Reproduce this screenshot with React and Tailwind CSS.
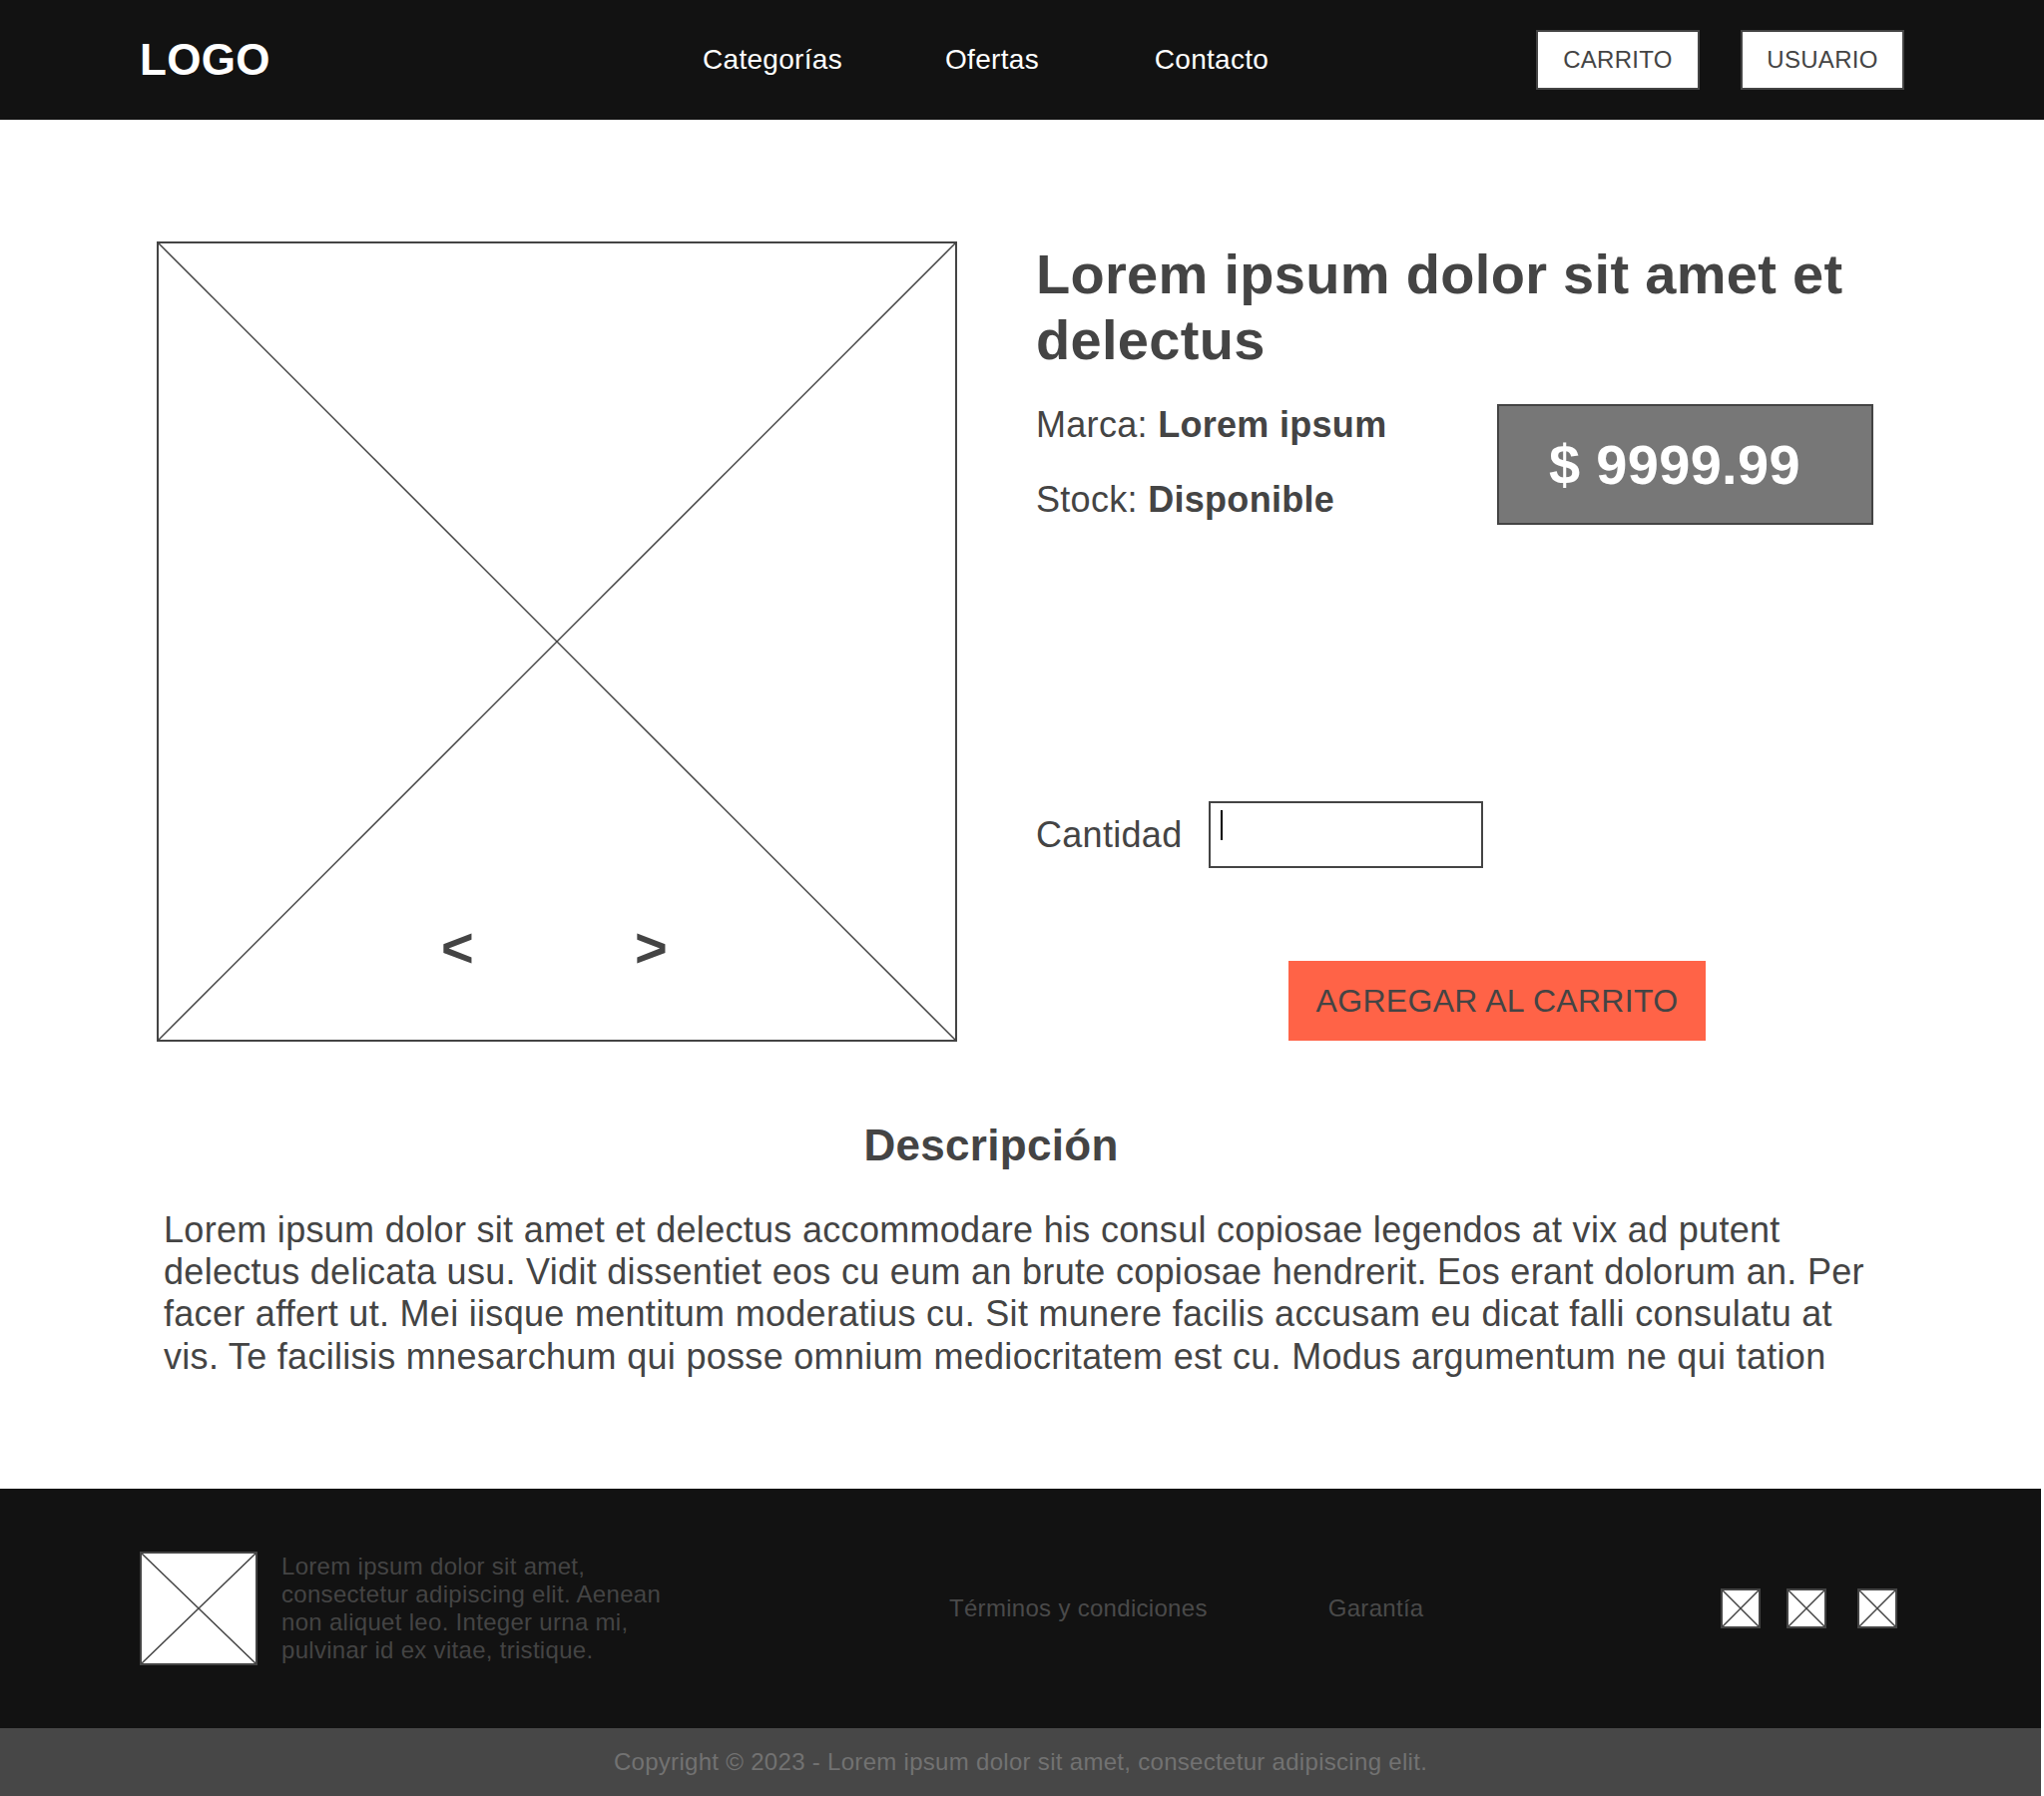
import { useState } from 'react';

function Placeholder({ className = '', stroke = 1.5 }) {
  return (
    <div className={`relative bg-white border-2 border-[#444] ${className}`}>
      <svg
        className="absolute inset-0 h-full w-full"
        viewBox="0 0 100 100"
        preserveAspectRatio="none"
      >
        <line x1="0" y1="0" x2="100" y2="100" stroke="#444" strokeWidth={stroke} vectorEffect="non-scaling-stroke" />
        <line x1="100" y1="0" x2="0" y2="100" stroke="#444" strokeWidth={stroke} vectorEffect="non-scaling-stroke" />
      </svg>
    </div>
  );
}

export default function App() {
  const [cantidad, setCantidad] = useState('');

  const navLinks = ['Categorías', 'Ofertas', 'Contacto'];

  return (
    <div className="min-h-screen bg-white font-['Liberation_Sans',Arial,sans-serif] tracking-[0.3px] text-[#444]">
      {/* Header */}
      <header className="flex h-[120px] items-center bg-[#121212] px-[140px]">
        <div className="w-[524px]">
          <span className="text-[44px] font-bold leading-none text-white">LOGO</span>
        </div>
        <nav className="flex">
          {navLinks.map((link) => (
            <a key={link} href="#" className="w-[220px] text-center text-[28px] text-white">
              {link}
            </a>
          ))}
        </nav>
        <div className="flex-1" />
        <div className="flex gap-[41px]">
          <button className="h-[60px] w-[164px] border-2 border-[#444] bg-white text-[24px] text-[#444]">
            CARRITO
          </button>
          <button className="h-[60px] w-[164px] border-2 border-[#444] bg-white text-[24px] text-[#444]">
            USUARIO
          </button>
        </div>
      </header>

      {/* Producto */}
      <main className="flex items-start pl-[157px] pt-[122px]">
        <div className="relative">
          <Placeholder className="h-[802px] w-[802px]" />
          <div className="absolute left-[285px] top-[680px] flex text-[56px] font-bold leading-none text-[#444]">
            <span>&lt;</span>
            <span className="ml-[161px]">&gt;</span>
          </div>
        </div>

        <div className="ml-[79px] flex-1 pr-[80px]">
          <h1 className="text-[56px] font-bold leading-[66px]">
            Lorem ipsum dolor sit amet et delectus
          </h1>

          <div className="mt-[31px] flex items-start">
            <div className="w-[462px] text-[36px] leading-[41px]">
              <p>
                Marca: <span className="font-bold">Lorem ipsum</span>
              </p>
              <p className="mt-[34px]">
                Stock: <span className="font-bold">Disponible</span>
              </p>
            </div>
            <div className="flex h-[121px] w-[377px] items-center border-2 border-[#444] bg-[#777] pl-[50px]">
              <span className="text-[56px] font-bold leading-none text-white">$ 9999.99</span>
            </div>
          </div>

          <div className="mt-[277px] flex items-center">
            <label className="text-[36px] leading-[41px]">Cantidad</label>
            <div className="relative ml-[26px]">
              <input
                type="text"
                value={cantidad}
                onChange={(e) => setCantidad(e.target.value)}
                className="h-[67px] w-[275px] border-2 border-[#444] bg-white px-3 text-[28px] outline-none"
              />
              <span className="absolute left-[12px] top-[9px] h-[30px] w-[2px] bg-black" />
            </div>
          </div>

          <button className="ml-[253px] mt-[93px] h-[80px] w-[418px] bg-[#ff6347] text-[32px] text-[#444]">
            AGREGAR AL CARRITO
          </button>
        </div>
      </main>

      {/* Descripción */}
      <section className="px-[164px] pb-[111px] pt-[78px]">
        <h2 className="pr-[62px] text-center text-[44px] font-bold leading-[51px]">Descripción</h2>
        <p className="mt-[39px] text-[36px] leading-[42.2px]">
          Lorem ipsum dolor sit amet et delectus accommodare his consul copiosae legendos at vix ad putent
          delectus delicata usu. Vidit dissentiet eos cu eum an brute copiosae hendrerit. Eos erant dolorum
          an. Per facer affert ut. Mei iisque mentitum moderatius cu. Sit munere facilis accusam eu dicat
          falli consulatu at vis. Te facilisis mnesarchum qui posse omnium mediocritatem est cu. Modus
          argumentum ne qui tation
        </p>
      </section>

      {/* Footer */}
      <footer className="mr-[3px]">
        <div className="flex h-[240px] items-center bg-[#121212] pl-[140px] pr-[144px]">
          <div className="flex w-[534px] items-center">
            <Placeholder className="h-[114px] w-[118px] shrink-0" />
            <p className="ml-[24px] w-[400px] text-[24px] leading-[28px] text-[#444]">
              Lorem ipsum dolor sit amet, consectetur adipiscing elit. Aenean non aliquet leo. Integer urna mi,
              pulvinar id ex vitae, tristique.
            </p>
          </div>
          <div className="ml-[277px] flex gap-[121px] text-[24px] text-[#4a4a4a]">
            <a href="#">Términos y condiciones</a>
            <a href="#">Garantía</a>
          </div>
          <div className="flex-1" />
          <div className="flex items-center">
            <Placeholder className="h-[40px] w-[40px]" />
            <Placeholder className="ml-[26px] h-[40px] w-[40px]" />
            <Placeholder className="ml-[31px] h-[40px] w-[40px]" />
          </div>
        </div>
        <div className="flex h-[68px] items-center justify-center bg-[#474747] text-[24px] text-[#727272]">
          Copyright © 2023 - Lorem ipsum dolor sit amet, consectetur adipiscing elit.
        </div>
      </footer>
    </div>
  );
}
